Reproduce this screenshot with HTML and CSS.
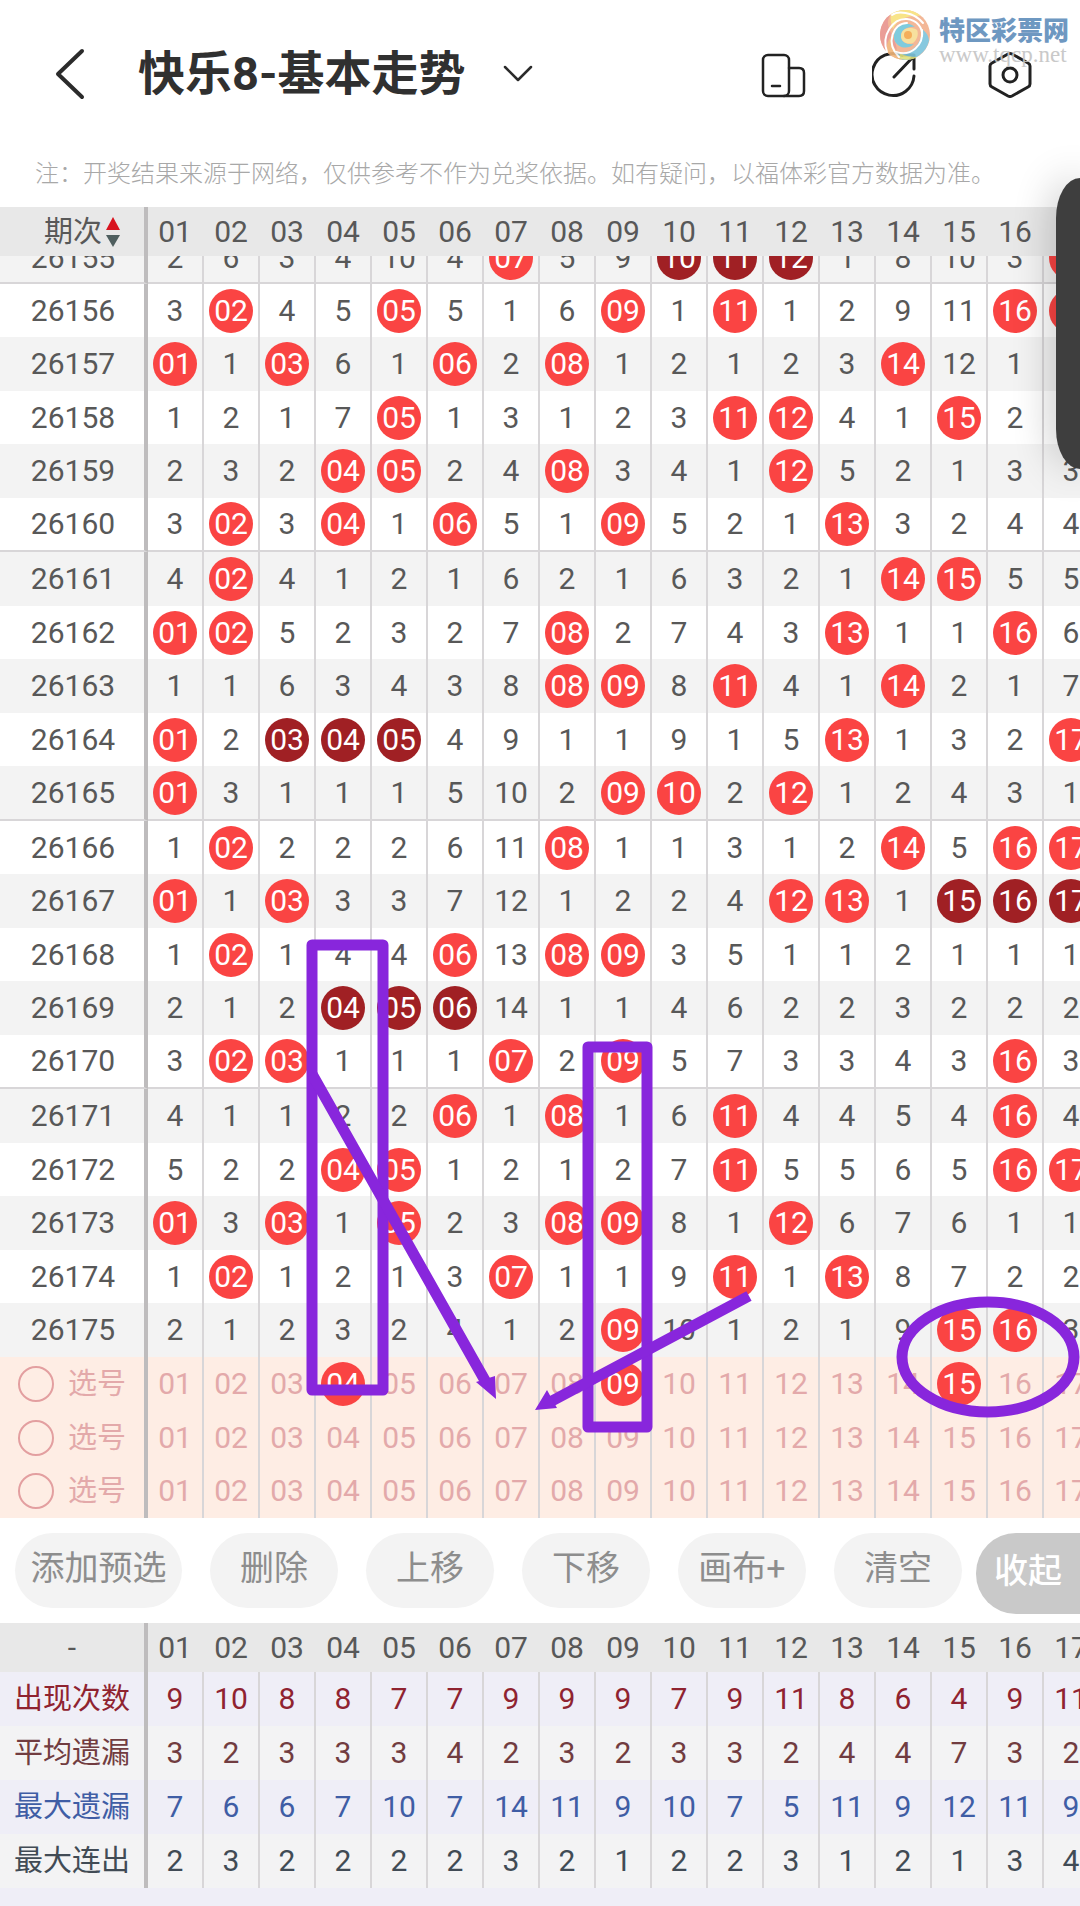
FILE: index.html
```html
<!DOCTYPE html>
<html lang="zh-CN">
<head>
<meta charset="utf-8">
<meta name="viewport" content="width=device-width, initial-scale=1">
<title>快乐8-基本走势</title>
<link rel="stylesheet" href="styles.css">
</head>
<body>
<header class="topbar">
  <button class="icon-btn back" type="button" aria-label="返回">
    <svg width="32" height="56" viewBox="0 0 32 56"><path d="M28 5 4 28l24 23" fill="none" stroke="#2b2b2b" stroke-width="4" stroke-linecap="round" stroke-linejoin="round"/></svg>
  </button>
  <h1 class="title">快乐8-基本走势</h1>
  <button class="icon-btn switch" type="button" aria-label="切换走势">
    <svg width="30" height="20" viewBox="0 0 30 20"><path d="M2 3l13 13L28 3" fill="none" stroke="#2b2b2b" stroke-width="2.5" stroke-linecap="round" stroke-linejoin="round"/></svg>
  </button>
  <nav class="tools">
    <button class="icon-btn" type="button" aria-label="横屏">
      <svg width="48" height="48" viewBox="0 0 48 48" fill="none" stroke="#222" stroke-width="2.5" stroke-linecap="round"><rect x="5" y="5" width="26" height="41" rx="5"/><path d="M31 18h10q5 0 5 5v18q0 5-5 5H26M14 36h8"/></svg>
    </button>
    <button class="icon-btn" type="button" aria-label="分享">
      <svg width="48" height="48" viewBox="0 0 48 48" fill="none" stroke="#222" stroke-width="3" stroke-linecap="round" stroke-linejoin="round"><path d="M30 5.500A21 21 0 1 0 42 26M22 27 42 6M30 5h12v14"/></svg>
    </button>
    <button class="icon-btn" type="button" aria-label="设置">
      <svg width="48" height="48" viewBox="0 0 48 48" fill="none" stroke="#222" stroke-width="3" stroke-linejoin="round"><path d="M22 4q2-1 4 0l16 9q2 1 2 3v18q0 2-2 3l-16 9q-2 1-4 0L6 37q-2-1-2-3V16q0-2 2-3z"/><circle cx="24" cy="25" r="7"/></svg>
    </button>
  </nav>
  <div class="watermark">
    <svg width="52" height="52" viewBox="-26 -26 52 52">
      <circle r="25" fill="#f2b08c"/>
      <path d="M-14-21A25 25 0 0 0-18 17C-2 22-10 6-14-2-18-10-18-16-14-21z" fill="#e8938c"/>
      <path d="M-14-21A25 25 0 0 1 16-19C4-20-8-16-12-6-14-12-15-16-14-21z" fill="#f8e27c"/>
      <path d="M-18 17A25 25 0 0 0 4 24.500C-8 20-14 10-13 0-18 6-19 12-18 17z" fill="#f0b478"/>
      <path d="M24 6A25 25 0 0 1-2 25C-6 23-8 21-10 18 6 20 17 10 17-6 21-3 24 1 24 6z" fill="#7cc4dc"/>
      <path d="M-6 23C0 26 8 25 12 22 6 22 0 21-5 18z" fill="#dfe07c"/>
      <path d="M10-8C0-16-12-8-11 3-10 12 2 16 9 9 2 10-4 7-4 1-4-5 3-9 10-8z" fill="#72c6da"/>
      <path d="M12-5C6-9-4-7-4 1-4 7 2 10 8 8 12 5 14-1 12-5z" fill="#f7dd94"/>
      <circle cx="3" cy="0" r="4" fill="#f4a64a"/>
      <g fill="none" stroke="#fff" stroke-width="2" stroke-linecap="round">
        <path d="M-18 17C-24 0-12-17 2-16 12-15 18-7 17 1"/>
        <path d="M-6 22C-20 8-12-12 2-12"/>
        <path d="M-9 17C6 22 19 10 17-5"/>
        <path d="M-13-20C-8-24 8-24 18-12"/>
      </g>
    </svg>
    <div class="watermark-text"><strong>特区彩票网</strong><span>www.tqcp.net</span></div>
  </div>
</header>
<p class="notice">注：开奖结果来源于网络，仅供参考不作为兑奖依据。如有疑问，以福体彩官方数据为准。</p>

<main>
  <section class="trend">
    <table class="grid">
      <thead><tr id="trend-head"><th scope="col"><button class="sort" type="button">期次<svg width="14" height="32" viewBox="0 0 14 32"><path d="M7 1l7 13H0z" fill="#d8141f"/><path d="M7 31l7-12H0z" fill="#4f5f5f"/></svg></button></th></tr></thead>
      <tbody id="draws"></tbody>
      <tbody id="picks"></tbody>
    </table>
    <svg class="marks" width="1080" height="1311" viewBox="0 207 1080 1311" fill="none" stroke="#8826dc" stroke-width="11" stroke-linejoin="round">
      <rect x="312" y="945" width="71" height="445"/>
      <rect x="588" y="1047" width="59" height="380"/>
      <path d="M312 1074 487 1384M749 1296 550 1402"/>
      <path d="M496 1399l-20-17 19-6zM535 1410l12-20 10 18z" fill="#8826dc" stroke="none"/>
      <ellipse cx="988" cy="1357" rx="86" ry="55"/>
    </svg>
  </section>

  <div class="actions">
    <button class="pill wide" type="button">添加预选</button>
    <button class="pill" type="button">删除</button>
    <button class="pill" type="button">上移</button>
    <button class="pill" type="button">下移</button>
    <button class="pill" type="button">画布+</button>
    <button class="pill" type="button">清空</button>
    <button class="collapse" type="button">收起</button>
  </div>

  <table class="grid stats">
    <thead><tr id="stats-head"><th scope="col">-</th></tr></thead>
    <tbody id="stats"></tbody>
  </table>
</main>
<aside class="side-panel"></aside>
<script src="app.js"></script>
</body>
</html>
```
FILE: styles.css
```css
* { box-sizing: border-box; }
body {
  position: relative;
  min-height: 100vh;
  margin: 0;
  overflow-x: hidden;
  background: #efeef7;
  color: #585858;
  font-family: Roboto, "Noto Sans CJK SC", sans-serif;
  font-size: 30px;
}
button { padding: 0; border: 0; background: none; color: inherit; font: inherit; }
svg { display: block; }

.topbar {
  position: relative;
  display: flex;
  align-items: center;
  height: 148px;
  padding: 0 46px 0 54px;
  background: #fff;
}
.title { margin: 0 0 0 52px; color: #303030; font-size: 47px; line-height: 60px; font-weight: 700; }
.switch { margin-left: 37px; }
.tools { display: flex; gap: 66px; margin-left: auto; }
.watermark { position: absolute; top: 9px; right: 11px; display: flex; gap: 8px; opacity: 0.9; }
.watermark-text { display: flex; flex-direction: column; padding-top: 6px; }
.watermark strong { color: #5f8dbb; font-size: 26px; line-height: 32px; font-weight: 900; }
.watermark span { color: #c4c4c4; font-family: "Liberation Serif", serif; font-size: 23px; line-height: 16px; }

.notice {
  margin: 0;
  padding: 0 35px 12px;
  overflow: hidden;
  background: #fff;
  color: #a8a8a8;
  font-family: "Noto Sans CJK SC", sans-serif;
  font-size: 24px;
  line-height: 47px;
  font-weight: 300;
  white-space: nowrap;
}

main { overflow: hidden; }
.trend { position: relative; }
.marks { position: absolute; top: 0; left: 0; }

.grid { width: calc(100% + 20px); table-layout: fixed; border-spacing: 0; line-height: 44px; text-align: center; }
.grid th, .grid td { height: 54px; padding: 0; border-right: 2px solid #d8d6d8; font-weight: 400; }
.grid th:first-child { width: 148px; border-right: 4px solid #bebcbd; }
.grid thead th { position: relative; z-index: 1; height: 49px; border-right-color: #e8e8e8; background: #e8e8e8; }
.grid thead th:first-child { border-right-color: #bebcbd; }
.cell { display: block; width: 44px; height: 44px; margin: 0 auto; }
.issue { display: block; padding-left: 2px; }
.sort { display: inline-flex; align-items: center; gap: 4px; margin-left: 20px; font-size: 29px; }

.draw { background: #f3f3f3; }
.draw:nth-child(even) { background: #fff; }
.draw:nth-child(even) > * { height: 53px; }
.draw:nth-child(5n+1) > * { height: 55px; border-bottom: 2px solid #d8d6d8; }
.draw:nth-child(10n+6) > * { height: 54px; }
.draw:first-child > * { height: 28px; }
.draw:last-child > * { height: 54px; border-bottom: 0; }
.draw:first-child .cell, .draw:first-child .issue { margin-top: -23px; }
.hit, .run { border-radius: 50%; background: #fa4443; color: #fff; }
.run { background: #a02024; }

.pick { background: #feede4; color: #e3a9aa; }
.pick:nth-child(even) > * { height: 53px; }
.pick label { display: flex; align-items: center; gap: 14px; margin-left: 18px; font-size: 29px; }
.pick input { width: 36px; height: 36px; margin: 0; border: 2px solid #e39fa0; border-radius: 50%; appearance: none; }

.actions { position: relative; display: flex; gap: 28px; padding: 15px; background: #fff; }
.pill { flex: none; width: 128px; height: 75px; padding-bottom: 10px; border-radius: 38px; background: #f3f3f3; color: #8d8d8d; font-size: 34px; }
.wide { width: 167px; }
.collapse {
  position: absolute;
  top: 15px;
  right: 0;
  width: 104px;
  height: 81px;
  padding-bottom: 10px;
  border-radius: 40px 0 0 40px;
  background: #c9c9c9;
  color: #fff;
  font-size: 34px;
  font-weight: 500;
}

.stats tbody tr { background: #f3f3f4; }
.stats tbody tr:nth-child(odd) { background: #efeef7; }
.stats tbody th { font-size: 29px; }
.count { color: #8f2330; }
.average { color: #713c40; }
.omit { color: #3f5da5; }
.streak { color: #414b55; }

.side-panel {
  position: absolute;
  top: 178px;
  right: 0;
  width: 24px;
  height: 291px;
  border-radius: 24px 0 0 24px / 40px 0 0 40px;
  background: #3e3e3e;
  box-shadow: 0 0 40px rgba(0, 0, 0, 0.3);
  z-index: 2;
}
```
FILE: app.js
```js
// "*" marks a drawn number, "#" a drawn number that is part of a run of three or more.
const draws = {
  26155: "2 6 3 4 10 4 *07 5 9 #10 #11 #12 1 8 10 3 *17",
  26156: "3 *02 4 5 *05 5 1 6 *09 1 *11 1 2 9 11 *16 *17",
  26157: "*01 1 *03 6 1 *06 2 *08 1 2 1 2 3 *14 12 1 1",
  26158: "1 2 1 7 *05 1 3 1 2 3 *11 *12 4 1 *15 2 2",
  26159: "2 3 2 *04 *05 2 4 *08 3 4 1 *12 5 2 1 3 3",
  26160: "3 *02 3 *04 1 *06 5 1 *09 5 2 1 *13 3 2 4 4",
  26161: "4 *02 4 1 2 1 6 2 1 6 3 2 1 *14 *15 5 5",
  26162: "*01 *02 5 2 3 2 7 *08 2 7 4 3 *13 1 1 *16 6",
  26163: "1 1 6 3 4 3 8 *08 *09 8 *11 4 1 *14 2 1 7",
  26164: "*01 2 #03 #04 #05 4 9 1 1 9 1 5 *13 1 3 2 *17",
  26165: "*01 3 1 1 1 5 10 2 *09 *10 2 *12 1 2 4 3 1",
  26166: "1 *02 2 2 2 6 11 *08 1 1 3 1 2 *14 5 *16 *17",
  26167: "*01 1 *03 3 3 7 12 1 2 2 4 *12 *13 1 #15 #16 #17",
  26168: "1 *02 1 4 4 *06 13 *08 *09 3 5 1 1 2 1 1 1",
  26169: "2 1 2 #04 #05 #06 14 1 1 4 6 2 2 3 2 2 2",
  26170: "3 *02 *03 1 1 1 *07 2 *09 5 7 3 3 4 3 *16 3",
  26171: "4 1 1 2 2 *06 1 *08 1 6 *11 4 4 5 4 *16 4",
  26172: "5 2 2 *04 *05 1 2 1 2 7 *11 5 5 6 5 *16 *17",
  26173: "*01 3 *03 1 *05 2 3 *08 *09 8 1 *12 6 7 6 1 1",
  26174: "1 *02 1 2 1 3 *07 1 1 9 *11 1 *13 8 7 2 2",
  26175: "2 1 2 3 2 4 1 2 *09 10 1 2 1 9 *15 *16 3"
};
const picks = [[4, 9, 15], [], []];
const stats = [
  ["出现次数", "count", "9 10 8 8 7 7 9 9 9 7 9 11 8 6 4 9 11"],
  ["平均遗漏", "average", "3 2 3 3 3 4 2 3 2 3 3 2 4 4 7 3 2"],
  ["最大遗漏", "omit", "7 6 6 7 10 7 14 11 9 10 7 5 11 9 12 11 9"],
  ["最大连出", "streak", "2 3 2 2 2 2 3 2 1 2 2 3 1 2 1 3 4"]
];

const numbers = Array.from({ length: 17 }, (_, i) => String(i + 1).padStart(2, "0"));
const kinds = { "*": " hit", "#": " run" };
const cell = v => `<td><span class="cell${kinds[v[0]] || ""}">${v.replace(/[*#]/, "")}</span></td>`;
const row = (kind, head, values) =>
  `<tr class="${kind}"><th scope="row">${head}</th>${values.map(cell).join("")}</tr>`;
const fill = (id, html) => document.getElementById(id).insertAdjacentHTML("beforeend", html);

const heads = numbers.map(n => `<th scope="col">${n}</th>`).join("");
fill("trend-head", heads);
fill("stats-head", heads);
fill("draws", Object.entries(draws).map(([issue, values]) =>
  row("draw", `<span class="issue">${issue}</span>`, values.split(" "))).join(""));
fill("picks", picks.map((chosen, i) =>
  row("pick", `<label><input type="radio" name="pick" value="${i}">选号</label>`,
    numbers.map(n => (chosen.includes(Number(n)) ? "*" : "") + n))).join(""));
fill("stats", stats.map(([name, kind, values]) => row(kind, name, values.split(" "))).join(""));
```
